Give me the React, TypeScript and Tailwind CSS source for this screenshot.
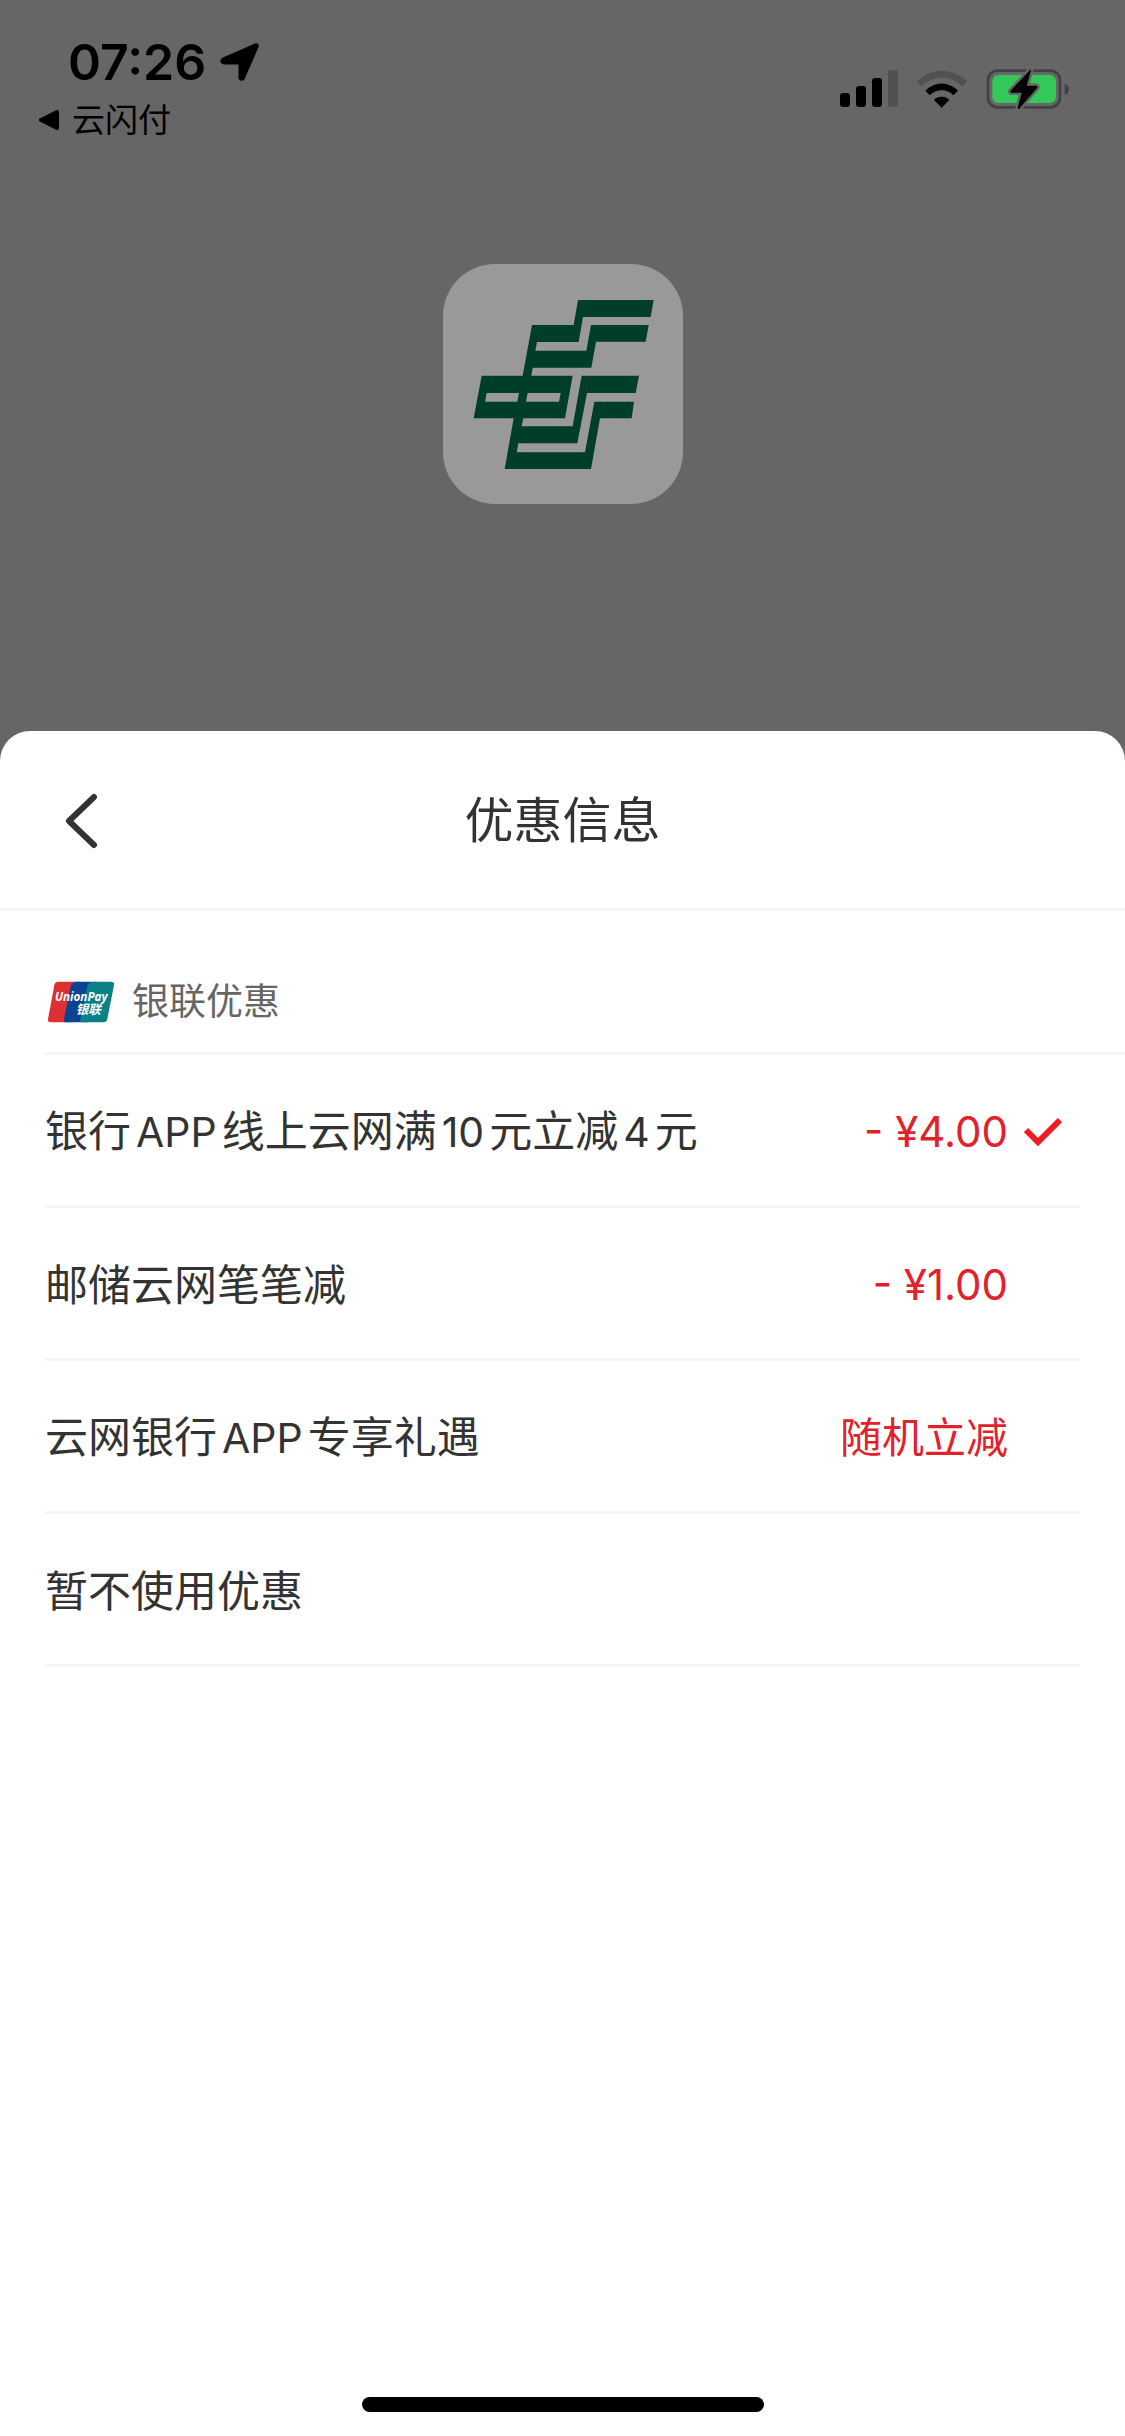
import React from 'react';

interface Offer {
  id: string;
  title: string;
  amount?: string;
}

const offers: Offer[] = [
  { id: 'app', title: '银行APP线上云网满10元立减4元', amount: '- ¥4.00' },
  { id: 'every', title: '邮储云网笔笔减', amount: '- ¥1.00' },
  { id: 'gift', title: '云网银行APP专享礼遇', amount: '随机立减' },
  { id: 'none', title: '暂不使用优惠' },
];

const SignalIcon: React.FC = () => (
  <svg className="w-[58px] h-[38px]" viewBox="0 0 58 38">
    <rect x="0" y="23" width="10" height="14" rx="3" />
    <rect x="16" y="16" width="10" height="21" rx="3" />
    <rect x="32" y="8" width="10" height="29" rx="3" />
    <rect x="48" y="0" width="10" height="37" rx="3" fill="#515151" />
  </svg>
);

const WifiIcon: React.FC = () => (
  <svg className="w-[52px] h-[38px]" viewBox="290 58 156 114">
    <path d="M293 92A104 104 0 0 1 443 92L429 107A86 86 0 0 0 307 107Z" fill="#515151" />
    <path d="M318 120A67 67 0 0 1 416 120L402 134A48 48 0 0 0 332 134Z" />
    <path d="M344 148A32 32 0 0 1 390 148L367 171Z" />
  </svg>
);

const BatteryIcon: React.FC = () => (
  <svg className="w-[84px] h-[42px]" viewBox="499 52 252 126">
    <rect x="505" y="60" width="216" height="110" rx="29" fill="none" stroke="#414141" strokeWidth="8" />
    <path d="M735 99Q748 104 748 116T735 134Z" fill="#414141" />
    <rect x="518" y="73" width="191" height="84" rx="18" fill="#34c759" />
    <path
      d="M632 57L573 120Q570 126 577 126H606L594 172Q596 177 600 173L653 111Q655 106 650 105H621L634 59Q635 54 632 57Z"
      stroke="#666666"
      strokeWidth="14"
      paintOrder="stroke"
      strokeLinejoin="round"
    />
  </svg>
);

const BankLogo: React.FC = () => (
  <svg className="w-full h-full" viewBox="36 42 720 720" role="img" aria-label="中国邮政储蓄银行">
    <path
      fillRule="evenodd"
      fill="#003d2b"
      d="M303 225H428L441 150H668L659 201H456L443 276H318L313 302H466L480 225H653L644 275H495L481 353H305L301 377H425L402 505H277L272 529H425L452 377H624L614 429H468L439 580H262L257 607H462L490 455H609L602 505H507L480 657H221L248 505H128L152 377H275ZM167 429L162 455H259L264 429ZM290 429L285 455H384L389 429Z"
    />
  </svg>
);

const UnionPayLogo: React.FC = () => (
  <svg className="w-[66px] h-[42px]" viewBox="54 61 198 126" role="img" aria-label="银联">
    <path d="M85 63H150L125 185H62Q52 185 54 175L73 73Q75 63 85 63Z" fill="#dc3033" />
    <path d="M142 63H200L175 185H111Q100 185 102 175L122 77Q125 63 142 63Z" fill="#0b4591" />
    <path d="M192 63H243Q254 63 252 73L232 175Q230 185 220 185H159Q149 185 151 175L172 77Q175 63 192 63Z" fill="#0a8087" />
    <text fill="#fff" fontStyle="italic">
      <tspan x="75" y="121" fontSize="35" fontWeight="700" fontFamily="Open Sans, sans-serif">UnionPay</tspan>
      <tspan x="137" y="160" fontSize="38" fontWeight="700" fontFamily="Noto Sans CJK SC, sans-serif">银联</tspan>
    </text>
  </svg>
);

const StatusBar: React.FC = () => (
  <div className="flex justify-between pl-[38px] pr-[55px] pt-[32px] text-black">
    <div>
      <div className="flex items-center gap-[14px] pl-[30px] h-[60px]">
        <span className="text-[50px] leading-[60px] font-semibold">07:26</span>
        <svg className="w-[40px] h-[40px]" viewBox="0 0 40 40">
          <path
            d="M3 17L35 3Q38 2 37 5L23 37Q21 38 20 36V21H4Q0 20 3 17Z"
            stroke="#000"
            strokeWidth="3"
            strokeLinejoin="round"
          />
        </svg>
      </div>
      <button className="flex items-center gap-[12px] h-[56px]">
        <svg className="w-[22px] h-[22px]" viewBox="0 0 22 22">
          <path d="M3 11L19 3V19Z" stroke="#000" strokeWidth="4" strokeLinejoin="round" />
        </svg>
        <span className="text-[33px] leading-[48px]">云闪付</span>
      </button>
    </div>
    <div className="flex items-center gap-[18px] h-[114px]">
      <SignalIcon />
      <WifiIcon />
      <BatteryIcon />
    </div>
  </div>
);

// Latin letters and digits sit slightly smaller, with a little air on both sides
const OfferTitle: React.FC<{ text: string }> = ({ text }) => (
  <span className="flex-1 text-[43px] text-[#333]">
    {text.split(/([A-Za-z0-9]+)/).map((part, i) =>
      i % 2 === 1 ? (
        <span key={i} className="mx-[5px] text-[41px]">{part}</span>
      ) : (
        part
      )
    )}
  </span>
);

const OfferRow: React.FC<{ offer: Offer; selected: boolean }> = ({ offer, selected }) => (
  <label className="flex items-center h-[153px] mx-[45px] pt-[3px] pr-[18px] border-b-3 border-[#f5f5f5] leading-[60px]">
    <input type="radio" name="offer" value={offer.id} defaultChecked={selected} className="peer sr-only" />
    <OfferTitle text={offer.title} />
    <span className="mr-[16px] text-[42px] text-[#e1222a]">{offer.amount}</span>
    <svg className="invisible peer-checked:visible w-[38px] h-[30px]" viewBox="0 0 38 30">
      <path d="M2 13L14 25L36 3" fill="none" stroke="#ee1b22" strokeWidth="6" />
    </svg>
  </label>
);

const App: React.FC = () => {
  return (
    <div className="min-h-screen flex flex-col bg-[#666] font-['Inter','Noto_Sans_CJK_SC',sans-serif]">
      <header className="h-[731px]">
        <StatusBar />
        <div className="w-[240px] h-[240px] mx-auto mt-[116px] rounded-[52px] bg-[#999]">
          <BankLogo />
        </div>
      </header>

      <main className="flex-1 flex flex-col bg-white rounded-t-[30px]">
        {/* Sheet title */}
        <div className="grid grid-cols-[120px_1fr_120px] items-center h-[180px] pt-[3px] border-b-3 border-[#f5f5f5]">
          <button aria-label="返回" className="pl-[64px]">
            <svg className="w-[36px] h-[56px]" viewBox="0 0 36 56">
              <path d="M30 4L5 28L30 52" fill="none" stroke="#333" strokeWidth="6" strokeLinecap="round" strokeLinejoin="round" />
            </svg>
          </button>
          <h1 className="text-center text-[49px] leading-[72px] text-[#333]">优惠信息</h1>
        </div>

        {/* Offer group */}
        <div className="flex items-center gap-[18px] h-[144px] ml-[45px] pl-[3px] pt-[40px] border-b-3 border-[#f5f5f5]">
          <UnionPayLogo />
          <h2 className="text-[37px] leading-[52px] text-[#666]">银联优惠</h2>
        </div>
        {offers.map((offer, i) => (
          <OfferRow key={offer.id} offer={offer} selected={i === 0} />
        ))}

        <div className="w-[402px] h-[15px] mx-auto mt-auto mb-[24px] rounded-full bg-black"></div>
      </main>
    </div>
  );
};

export default App;
